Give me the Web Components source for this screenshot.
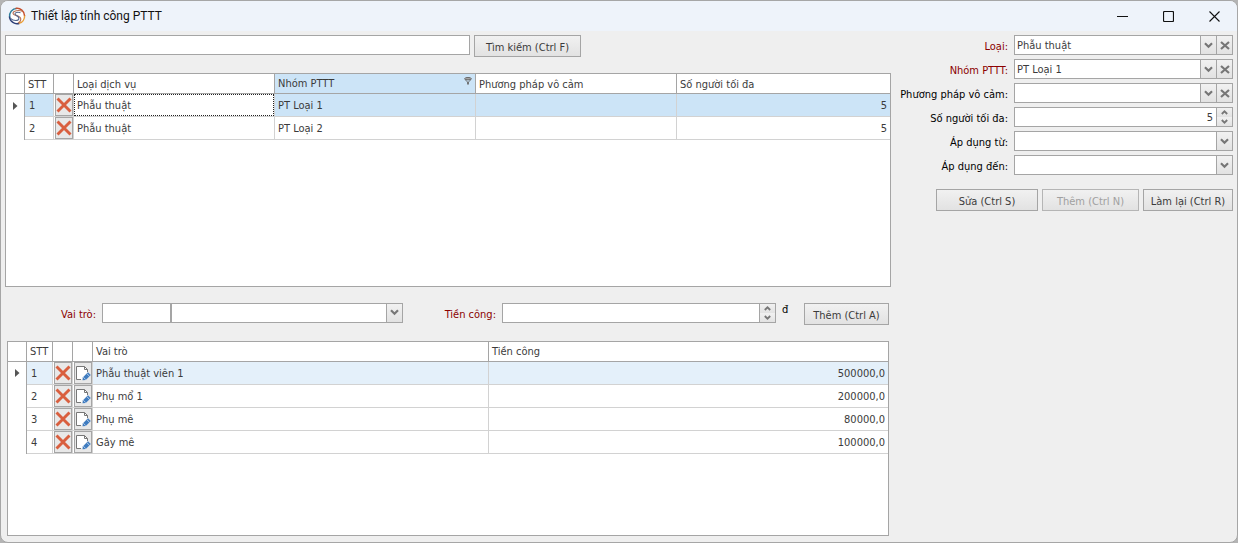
<!DOCTYPE html>
<html lang="vi">
<head>
<meta charset="utf-8">
<title>Thiết lập tính công PTTT</title>
<style>
  html { background: #b4b4b4; }
  body {
    margin: 0;
    font: 11px/14px "DejaVu Sans Condensed", "DejaVu Sans", sans-serif;
    color: #3b3b3b;
    --line: #a5a5a5;
    --soft: #d2d2d2;
    --face: linear-gradient(#f1f1f1, #e2e2e2);
    --required: #8b0000;
  }
</style>
</head>
<body>
<app-window heading="Thiết lập tính công PTTT">
  <main-pane slot="main"></main-pane>
  <detail-form slot="side"></detail-form>
</app-window>

<script>
const define = (name, html, setup) => {
  const template = document.createElement('template');
  template.innerHTML = html;
  customElements.define(name, class extends HTMLElement {
    connectedCallback() {
      if (this.shadowRoot) return;
      const root = this.attachShadow({ mode: 'open' });
      root.append(template.content.cloneNode(true));
      if (setup) setup(this, root);
    }
  });
};

const chevron = '<svg width="9" height="7" viewBox="0 0 9 7"><path d="M1 1.2 4.5 4.7 8 1.2" fill="none" stroke="#777" stroke-width="2.2"/></svg>';
const cross = '<svg width="10" height="9" viewBox="0 0 10 9"><path d="M1 1 9 8M9 1 1 8" fill="none" stroke="#777" stroke-width="2.2"/></svg>';
const small = (d) => `<svg width="7" height="5" viewBox="0 0 7 5"><path d="${d}" fill="none" stroke="#777" stroke-width="1.8"/></svg>`;

/* Window frame with title bar */
define('app-window', `
  <style>
    :host { display: flex; flex-direction: column; box-sizing: border-box; min-height: 100vh;
            border: 1px solid #a6a6a6; border-radius: 8px; background: #efefef; overflow: hidden; }
    header { display: flex; align-items: center; height: 30px; padding-left: 7px; background: #eef3fa; color: #111; }
    h1 { flex: 1; margin: 0 0 0 5px; font: 12px/16px Roboto, "Noto Sans", sans-serif; }
    header svg { display: block; }
    button { display: flex; align-items: center; justify-content: center; width: 46px; height: 30px;
             padding: 0; border: 0; background: none; }
    .content { flex: 1; display: grid; grid-template-columns: minmax(0, 1fr) 337px; gap: 5px; padding: 4px 4px 6px; }
    ::slotted(*) { min-width: 0; }
  </style>
  <header>
    <svg width="18" height="18" viewBox="0 0 18 18" fill="none" aria-hidden="true">
      <circle cx="9" cy="9" r="7.6" fill="#fff"/>
      <path d="M9 1.4A7.6 7.6 0 0 0 1.6 10.500" stroke="#2f7f9c" stroke-width="1.4"/>
      <path d="M1.500 9.500A7.6 7.6 0 0 0 11.600 16.200" stroke="#2c3f78" stroke-width="1.5"/>
      <path d="M7.500 1.500A7.6 7.6 0 0 1 16.6 9" stroke="#c5502e" stroke-width="1.5"/>
      <path d="M16.6 8.6A7.6 7.6 0 0 1 11 16.3" stroke="#eaa13c" stroke-width="1.5"/>
      <path d="M14.500 4.300C11 3 5 3.300 5 6.200 5 9.200 12.800 8 12.800 12 12.800 14 11.500 15.300 10 16" stroke="#b87459" stroke-width="1.100"/>
      <path d="M12.500 5.700C9.500 4.800 6.900 5.600 7 6.800 7.200 8.800 11.200 9 10.900 11.600 10.500 14.400 5.500 14 2.500 11.500" stroke="#55698f" stroke-width="1.100"/>
    </svg>
    <h1></h1>
    <button aria-label="Thu nhỏ"><svg width="11" height="11"><path d="M0 5.500H11" stroke="#111"/></svg></button>
    <button aria-label="Phóng to"><svg width="11" height="11" fill="none"><rect x=".5" y=".5" width="10" height="10" rx="1" stroke="#111" stroke-width="1.2"/></svg></button>
    <button aria-label="Đóng"><svg width="11" height="11"><path d="M.5 .5 10.500 10.500M10.500 .5 .5 10.500" stroke="#111" stroke-width="1.1"/></svg></button>
  </header>
  <div class="content"><slot name="main"></slot><slot name="side"></slot></div>
`, (host, root) => { root.querySelector('h1').textContent = host.getAttribute('heading'); });

/* Push button */
define('push-button', `
  <style>
    :host { display: block; }
    button { display: block; box-sizing: border-box; width: 100%; height: 22px; padding: 2px 0 0; border: 1px solid var(--line);
             background: var(--face); font: inherit; line-height: 20px; color: inherit; white-space: nowrap; text-align: center; }
    button:disabled { color: #a0a0a0; border-color: #b5b5b5; }
  </style>
  <button type="button"><slot></slot></button>
`, (host, root) => { root.querySelector('button').disabled = host.hasAttribute('disabled'); });

/* Labelled editor: kind = text | combo | date | spin; "code" puts a short code box before a combo */
define('form-field', `
  <style>
    :host { display: grid; grid-template-columns: minmax(0, 1fr) 219px; column-gap: 5px; }
    :host([required]) label { color: var(--required); }
    label { color: #000; text-align: right; padding: 5px 1px 0 0; white-space: nowrap; height: 15px; }
    .row { display: flex; min-width: 0; }
    .box { flex: 1; display: flex; box-sizing: border-box; min-width: 0; height: 20px; border: 1px solid var(--line); background: #fff; }
    .code { flex: 0 0 69px; }
    input, select { flex: 1; min-width: 0; width: 0; margin: 0; padding: 2px 2px 0; border: 0; outline: 0; background: none;
                    font: inherit; color: inherit; appearance: none; border-radius: 0; }
    .spin input { text-align: right; padding-right: 3px; }
    button { display: flex; align-items: center; justify-content: center; box-sizing: border-box; width: 16px; padding: 0;
             border: 0; border-left: 1px solid var(--line); background: var(--face); }
    .steps { display: flex; flex-direction: column; }
    .steps button { flex: 1; }
    svg { display: block; }
  </style>
  <label for="editor"></label>
  <div class="row"></div>
`, (host, root) => {
  const name = host.getAttribute('label');
  const kind = host.getAttribute('kind') || 'text';
  const value = host.getAttribute('value') || '';
  const code = host.hasAttribute('code');
  root.querySelector('label').textContent = name + ':';
  const editor = kind === 'combo'
    ? `<select ${code ? `aria-label="${name}"` : 'id="editor"'}><option>${value}</option></select>`
    : `<input id="editor" type="text" value="${value}">`;
  const buttons = kind === 'spin'
    ? `<span class="steps"><button type="button" aria-label="Tăng">${small('M.8 4 3.500 1.300 6.200 4')}</button><button type="button" aria-label="Giảm">${small('M.8 1 3.500 3.700 6.200 1')}</button></span>`
    : `<button type="button" class="open" aria-label="Mở">${chevron}</button>` +
      (host.hasAttribute('clearable') ? `<button type="button" aria-label="Xóa">${cross}</button>` : '');
  root.querySelector('.row').innerHTML =
    (code ? '<div class="box code"><input id="editor" type="text"></div>' : '') +
    `<div class="box ${kind}">${editor}${buttons}</div>`;
  const select = root.querySelector('select');
  if (select) root.querySelector('.open').addEventListener('click', () => select.showPicker && select.showPicker());
});

/* Detail form on the right */
define('detail-form', `
  <style>
    :host { display: flex; flex-direction: column; gap: 4px; }
    .actions { display: grid; grid-template-columns: 102px 97px 90px; justify-content: end; gap: 4px; margin-top: 10px; }
  </style>
  <form-field label="Loại" kind="combo" value="Phẫu thuật" clearable required></form-field>
  <form-field label="Nhóm PTTT" kind="combo" value="PT Loại 1" clearable required></form-field>
  <form-field label="Phương pháp vô cảm" kind="combo" clearable></form-field>
  <form-field label="Số người tối đa" kind="spin" value="5"></form-field>
  <form-field label="Áp dụng từ" kind="date"></form-field>
  <form-field label="Áp dụng đến" kind="date"></form-field>
  <div class="actions">
    <push-button>Sửa (Ctrl S)</push-button>
    <push-button disabled>Thêm (Ctrl N)</push-button>
    <push-button>Làm lại (Ctrl R)</push-button>
  </div>
`);

/* Data grid */
const icons = {
  remove: ['Xóa', '<svg width="16" height="16" viewBox="0 0 16 16"><path d="M1.500 1.500 14.500 14.500M14.500 1.500 1.500 14.500" stroke="#d95f3f" stroke-width="2.900" fill="none"/></svg>'],
  edit: ['Sửa', '<svg width="16" height="16" viewBox="0 0 16 16" fill="none"><path d="M6.500 14.500H1.500V1.500H9.500L12.500 4.500V7" fill="#fff"/><path d="M6 14.500H1.500V1.500H9.500L12.500 4.500V7M9.500 1.500V4.500H12.500" stroke="#777"/><path d="M7.500 15.300 8 12.200 13 7.200 15.800 10 10.800 15Z" fill="#3f7cc0"/><path d="M8.300 12.200 10.800 14.700M11.700 8.500 14.500 11.300" stroke="#e8eef6" stroke-width=".7"/></svg>']
};
const filterIcon = '<svg class="filter" width="8" height="8" viewBox="0 0 8 8" fill="none" aria-label="Đã lọc"><ellipse cx="4" cy="1.700" rx="3.300" ry="1.200" fill="#aaa" stroke="#666"/><path d="M1 2.500 3.500 5V7.500M7 2.500 4.500 5V7.500" stroke="#666" stroke-width=".9"/></svg>';
const grids = {
  services: {
    columns: [
      { w: 19, mark: true }, { w: 29, title: 'STT' }, { w: 20, icon: 'remove' },
      { w: 201, title: 'Loại dịch vụ' }, { w: 201, title: 'Nhóm PTTT', sorted: true },
      { w: 201, title: 'Phương pháp vô cảm' }, { title: 'Số người tối đa', num: true }
    ],
    rows: [['', '1', '', 'Phẫu thuật', 'PT Loại 1', '', '5'], ['', '2', '', 'Phẫu thuật', 'PT Loại 2', '', '5']],
    focus: 3
  },
  roles: {
    columns: [
      { w: 19, mark: true }, { w: 26, title: 'STT' }, { w: 20, icon: 'remove' }, { w: 20, icon: 'edit' },
      { w: 396, title: 'Vai trò' }, { title: 'Tiền công', num: true }
    ],
    rows: [
      ['', '1', '', '', 'Phẫu thuật viên 1', '500000,0'], ['', '2', '', '', 'Phụ mổ 1', '200000,0'],
      ['', '3', '', '', 'Phụ mê', '80000,0'], ['', '4', '', '', 'Gây mê', '100000,0']
    ]
  }
};
define('data-grid', `
  <style>
    :host { display: block; box-sizing: border-box; border: 1px solid var(--line); background: #fff; --pick: #cce4f7; }
    :host([quiet]) { --pick: #e4f0fa; }
    table { width: 100%; table-layout: fixed; border-collapse: separate; border-spacing: 0; }
    th, td { box-sizing: border-box; padding: 2px 3px 0; font-weight: normal; text-align: left; white-space: nowrap; overflow: hidden; }
    th { height: 20px; border-right: 1px solid var(--line); border-bottom: 1px solid var(--line); }
    td { height: 23px; border-right: 1px solid var(--soft); border-bottom: 1px solid var(--soft); }
    td:nth-child(2) { padding-left: 4px; }
    th:last-child, td:last-child { border-right: 0; }
    td.mark { border-right-color: var(--line); border-bottom: 0; padding: 0; }
    td.mark svg { display: block; margin: 0 auto; }
    th.sorted { background: #cce4f7; padding-top: 0; }
    th.sorted div { display: flex; justify-content: space-between; }
    tr.picked td:not(.mark, .tool, .focus) { background: var(--pick); }
    td.num { text-align: right; }
    td.tool { padding: 0 0 0 1px; }
    td.focus { padding: 0; }
    td.focus div { box-sizing: border-box; height: 22px; padding: 4px 2px 0; border: 1px dotted #222; }
    button { display: flex; align-items: center; justify-content: center; box-sizing: border-box; width: 18px; height: 22px;
             padding: 0; border: 1px solid var(--line); background: #e8e8e8; }
    button svg { flex: none; }
  </style>
  <table><colgroup></colgroup><thead><tr></tr></thead><tbody></tbody></table>
`, (host, root) => {
  const { columns, rows, focus } = grids[host.getAttribute('source')];
  root.querySelector('colgroup').innerHTML = columns.map(c => `<col${c.w ? ` style="width:${c.w}px"` : ''}>`).join('');
  root.querySelector('thead tr').innerHTML = columns.map(c => c.sorted
    ? `<th class="sorted"><div>${c.title}${filterIcon}</div></th>` : `<th>${c.title || ''}</th>`).join('');
  root.querySelector('tbody').innerHTML = rows.map((row, r) => `<tr${r ? '' : ' class="picked"'}>` + row.map((text, i) => {
    const c = columns[i];
    if (c.mark) return `<td class="mark">${r ? '' : '<svg width="5" height="8" viewBox="0 0 5 8"><path d="M0 0 4.500 4 0 8Z" fill="#555"/></svg>'}</td>`;
    if (c.icon) return `<td class="tool"><button type="button" aria-label="${icons[c.icon][0]}">${icons[c.icon][1]}</button></td>`;
    if (!r && i === focus) return `<td class="focus"><div>${text}</div></td>`;
    return `<td${c.num ? ' class="num"' : ''}>${text}</td>`;
  }).join('') + '</tr>').join('');
});

/* Left side: search, service list, role entry, role list */
define('main-pane', `
  <style>
    :host { display: flex; flex-direction: column; gap: 16px; }
    .search { display: grid; grid-template-columns: 465px 107px; gap: 4px; }
    .search input { box-sizing: border-box; width: 100%; height: 20px; padding: 0 2px; border: 1px solid var(--line);
                    background: #fff; font: inherit; outline: 0; }
    .entry { display: flex; padding-right: 2px; }
    .role { flex: 232 1 166px; grid-template-columns: 92px minmax(0, 1fr); }
    .pay { flex: 274 1 99px; grid-template-columns: 94px minmax(0, 1fr); }
    .unit { flex: 0 0 22px; padding-left: 6px; color: #000; }
    .entry push-button { flex: 0 0 85px; }
    .services { flex: 214 1 0; }
    .roles { flex: 195 1 0; margin: 0 2px; }
  </style>
  <div class="search">
    <input type="search" aria-label="Từ khóa">
    <push-button>Tìm kiếm (Ctrl F)</push-button>
  </div>
  <data-grid class="services" source="services"></data-grid>
  <div class="entry">
    <form-field class="role" label="Vai trò" kind="combo" code required></form-field>
    <form-field class="pay" label="Tiền công" kind="spin" required></form-field>
    <span class="unit">đ</span>
    <push-button>Thêm (Ctrl A)</push-button>
  </div>
  <data-grid class="roles" source="roles" quiet></data-grid>
`);
</script>
</body>
</html>
